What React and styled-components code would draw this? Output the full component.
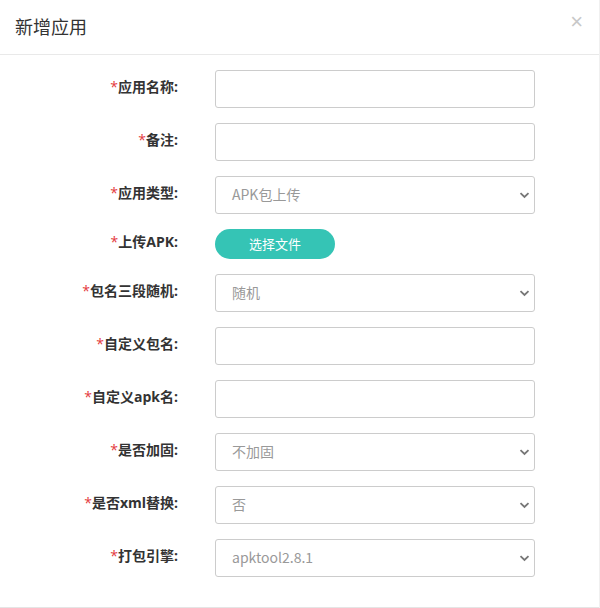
import React from "react";
import styled, { createGlobalStyle } from "styled-components";

const Global = createGlobalStyle`
  html, body { margin: 0; padding: 0; background: #fff; }
  body { font-family: "Noto Sans CJK SC", "Noto Sans", sans-serif; }
  * { box-sizing: border-box; }
`;

const Modal = styled.div`
  width: 600px;
  height: 608px;
  background: #fff;
  border-right: 1px solid #f0f0f0;
  display: flex;
  flex-direction: column;
`;

const Header = styled.div`
  height: 55px;
  display: flex;
  align-items: center;
  justify-content: space-between;
  padding: 0 16px 0 15px;
  border-bottom: 1px solid #e9e9e9;
`;

const Title = styled.h4`
  margin: 0;
  margin-top: -2px;
  font-size: 18px;
  font-weight: 400;
  color: #333;
  line-height: 1;
`;

const Close = styled.span`
  font-family: "Liberation Sans", Arial, sans-serif;
  font-size: 22px;
  color: #c8c8c8;
  line-height: 1;
  margin-top: -10px;
`;

const Body = styled.form`
  flex: 1;
  display: flex;
  flex-direction: column;
  gap: 15px;
  padding-top: 15px;
  border-bottom: 1px solid #e5e5e5;
`;

const Row = styled.div`
  display: grid;
  grid-template-columns: 178px 320px;
  column-gap: 37px;
  align-items: center;
  height: ${(p) => (p.$short ? 30 : 38)}px;
`;

const Label = styled.label`
  text-align: right;
  font-family: "Open Sans", "Noto Sans CJK SC", sans-serif;
  font-size: 14px;
  font-weight: 700;
  color: #333;
  line-height: 1;
  margin-top: -4px;
`;

const Star = styled.span`
  color: #e4393c;
  font-weight: 400;
`;

const Input = styled.input`
  width: 320px;
  height: 38px;
  border: 1px solid #ccc;
  border-radius: 3px;
  padding: 0 16px;
  font-size: 14px;
  font-family: inherit;
  outline: none;
`;

const SelectBox = styled.div`
  position: relative;
  width: 320px;
  height: 38px;
  border: 1px solid #ccc;
  border-radius: 3px;
  display: flex;
  align-items: center;
  padding: 0 16px 3px;
  font-size: 14px;
  color: #999;
`;

const Chevron = styled.svg`
  position: absolute;
  right: 4px;
  top: 50%;
  margin-top: -3px;
`;

const FileButton = styled.button`
  width: 120px;
  height: 30px;
  border: none;
  border-radius: 15px;
  background: #35c4b5;
  color: #fff;
  font-size: 13px;
  font-family: inherit;
  padding: 0 0 2px;
  cursor: pointer;
`;

const Select = ({ value }) => (
  <SelectBox>
    {value}
    <Chevron width="11" height="7" viewBox="0 0 11 7">
      <path d="M1.5 1.2 L5.5 5 L9.5 1.2" fill="none" stroke="#777" strokeWidth="1.8" />
    </Chevron>
  </SelectBox>
);

const fields = [
  { label: "应用名称:", kind: "input" },
  { label: "备注:", kind: "input" },
  { label: "应用类型:", kind: "select", value: "APK包上传" },
  { label: "上传APK:", kind: "file" },
  { label: "包名三段随机:", kind: "select", value: "随机" },
  { label: "自定义包名:", kind: "input" },
  { label: "自定义apk名:", kind: "input" },
  { label: "是否加固:", kind: "select", value: "不加固" },
  { label: "是否xml替换:", kind: "select", value: "否" },
  { label: "打包引擎:", kind: "select", value: "apktool2.8.1" },
];

export default function App() {
  return (
    <>
      <Global />
      <Modal>
        <Header>
          <Title>新增应用</Title>
          <Close>×</Close>
        </Header>
        <Body>
          {fields.map((f) => (
            <Row key={f.label} $short={f.kind === "file"}>
              <Label>
                <Star>*</Star>
                {f.label}
              </Label>
              {f.kind === "input" && <Input type="text" />}
              {f.kind === "select" && <Select value={f.value} />}
              {f.kind === "file" && <FileButton type="button">选择文件</FileButton>}
            </Row>
          ))}
        </Body>
      </Modal>
    </>
  );
}
